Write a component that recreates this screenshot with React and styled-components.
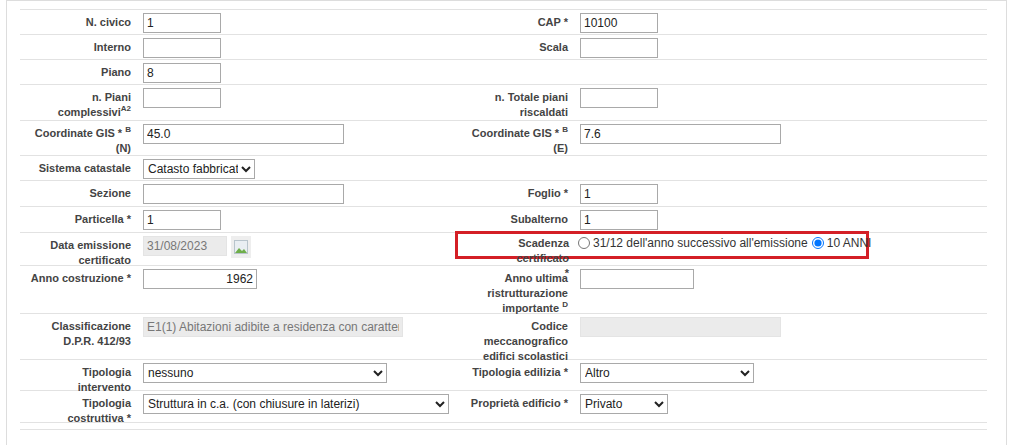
import React from "react";
import styled, { createGlobalStyle } from "styled-components";

const Global = createGlobalStyle`
  body { margin: 0; background: #fff; font-family: "Liberation Sans", Arial, sans-serif; }
`;

const Frame = styled.div`
  margin: 0 17px 0 6px;
  border-left: 1px solid #ddd;
  border-right: 1px solid #ddd;
  border-top: 1px solid #ddd;
  padding: 8px 19px 0 13px;
  height: 445px;
  box-sizing: border-box;
`;

const Row = styled.div`
  display: grid;
  grid-template-columns: 123px 317px 120px 1fr;
  border-top: 1px solid #e2e2e2;
  height: ${(p) => p.h || 25}px;
  box-sizing: border-box;
`;

const Label = styled.div`
  font-size: 11px;
  font-weight: bold;
  color: #444;
  text-align: right;
  padding: 5px 12px 0 ${(p) => p.pl || 8}px;
  line-height: 15px;
  sup { font-size: 8px; line-height: 0; vertical-align: 5px; }
`;

const Cell = styled.div`
  padding-top: 3px;
  display: flex;
  align-items: flex-start;
  gap: 4px;
  font-size: 12px;
  color: #333;
  white-space: nowrap;
`;

const Input = styled.input`
  width: ${(p) => p.w || 78}px;
  height: 20px;
  box-sizing: border-box;
  border: 1px solid ${(p) => (p.disabled ? "#e4e4e4" : "#a9a9a9")};
  background: ${(p) => (p.disabled ? "#ebebeb" : "#fff")};
  color: ${(p) => (p.disabled ? "#777" : "#222")};
  font: 12px "Liberation Sans", Arial, sans-serif;
  padding: 2px 3px;
  text-align: ${(p) => (p.right ? "right" : "left")};
`;

const Select = styled.select`
  width: ${(p) => p.w}px;
  height: 20px;
  font: 12px "Liberation Sans", Arial, sans-serif;
  color: #222;
  border: 1px solid #a9a9a9;
  background: #fff;
`;

const CalBtn = styled.div`
  width: 20px;
  height: 22px;
  background: #eee;
  display: flex;
  align-items: center;
  justify-content: center;
`;

const Highlight = styled.div`
  grid-column: 3 / 5;
  display: grid;
  grid-template-columns: 120px 1fr;
  width: 414px;
  margin-left: -5px;
  border: 3px solid #d41f26;
  box-sizing: border-box;
  height: 28px;
  margin-top: -2px;
`;

const Radio = styled.label`
  display: flex;
  align-items: center;
  font-size: 12px;
  color: #333;
  input { margin: 0 3px 0 0; width: 12px; height: 12px; }
`;

export default function App() {
  return (
    <>
      <Global />
      <Frame>
        <Row>
          <Label>N. civico</Label>
          <Cell><Input defaultValue="1" /></Cell>
          <Label>CAP *</Label>
          <Cell><Input defaultValue="10100" /></Cell>
        </Row>
        <Row>
          <Label>Interno</Label>
          <Cell><Input /></Cell>
          <Label>Scala</Label>
          <Cell><Input /></Cell>
        </Row>
        <Row>
          <Label>Piano</Label>
          <Cell><Input defaultValue="8" /></Cell>
          <Label />
          <Cell />
        </Row>
        <Row h={36}>
          <Label>n. Piani complessivi<sup>A2</sup></Label>
          <Cell><Input /></Cell>
          <Label pl={20}>n. Totale piani riscaldati</Label>
          <Cell><Input /></Cell>
        </Row>
        <Row h={35}>
          <Label>Coordinate GIS * <sup>B</sup> (N)</Label>
          <Cell><Input w={201} defaultValue="45.0" /></Cell>
          <Label>Coordinate GIS * <sup>B</sup> (E)</Label>
          <Cell><Input w={201} defaultValue="7.6" /></Cell>
        </Row>
        <Row>
          <Label pl={0}>Sistema catastale</Label>
          <Cell><Select w={112}><option>Catasto fabbricati</option></Select></Cell>
          <Label />
          <Cell />
        </Row>
        <Row h={26}>
          <Label>Sezione</Label>
          <Cell><Input w={201} /></Cell>
          <Label>Foglio *</Label>
          <Cell><Input defaultValue="1" /></Cell>
        </Row>
        <Row h={26}>
          <Label>Particella *</Label>
          <Cell><Input defaultValue="1" /></Cell>
          <Label>Subalterno</Label>
          <Cell><Input defaultValue="1" /></Cell>
        </Row>
        <Row h={33}>
          <Label>Data emissione certificato</Label>
          <Cell>
            <Input w={84} disabled defaultValue="31/08/2023" />
            <CalBtn>
              <svg width="14" height="14" viewBox="0 0 14 14">
                <rect x="0.5" y="0.5" width="13" height="13" fill="#e9eef2" stroke="#b8c4cc" />
                <path d="M1 13 L5 8 L8 11 L10 9 L13 13 Z" fill="#6fae4a" />
              </svg>
            </CalBtn>
          </Cell>
          <Highlight>
            <Label pl={0} style={{ paddingTop: 2, paddingRight: 9 }}>Scadenza certificato<br />*</Label>
            <Cell style={{ paddingTop: 2 }}>
              <Radio><input type="radio" name="s" />31/12 dell'anno successivo all'emissione</Radio>
              <Radio><input type="radio" name="s" defaultChecked />10 ANNI</Radio>
            </Cell>
          </Highlight>
        </Row>
        <Row h={48}>
          <Label>Anno costruzione *</Label>
          <Cell><Input w={114} right defaultValue="1962" /></Cell>
          <Label>Anno ultima ristrutturazione importante <sup>D</sup></Label>
          <Cell><Input w={114} /></Cell>
        </Row>
        <Row h={46}>
          <Label>Classificazione D.P.R. 412/93</Label>
          <Cell><Input w={260} disabled defaultValue="E1(1) Abitazioni adibite a residenza con carattere continuativo" /></Cell>
          <Label>Codice meccanografico edifici scolastici</Label>
          <Cell><Input w={201} disabled /></Cell>
        </Row>
        <Row h={31}>
          <Label pl={30}>Tipologia intervento</Label>
          <Cell><Select w={244}><option>nessuno</option></Select></Cell>
          <Label pl={0}>Tipologia edilizia *</Label>
          <Cell><Select w={174}><option>Altro</option></Select></Cell>
        </Row>
        <Row h={32}>
          <Label pl={30}>Tipologia costruttiva *</Label>
          <Cell><Select w={306}><option>Struttura in c.a. (con chiusure in laterizi)</option></Select></Cell>
          <Label pl={0}>Proprietà edificio *</Label>
          <Cell><Select w={88}><option>Privato</option></Select></Cell>
        </Row>
        <Row h={7} />
        <Row h={7} />
      </Frame>
    </>
  );
}
